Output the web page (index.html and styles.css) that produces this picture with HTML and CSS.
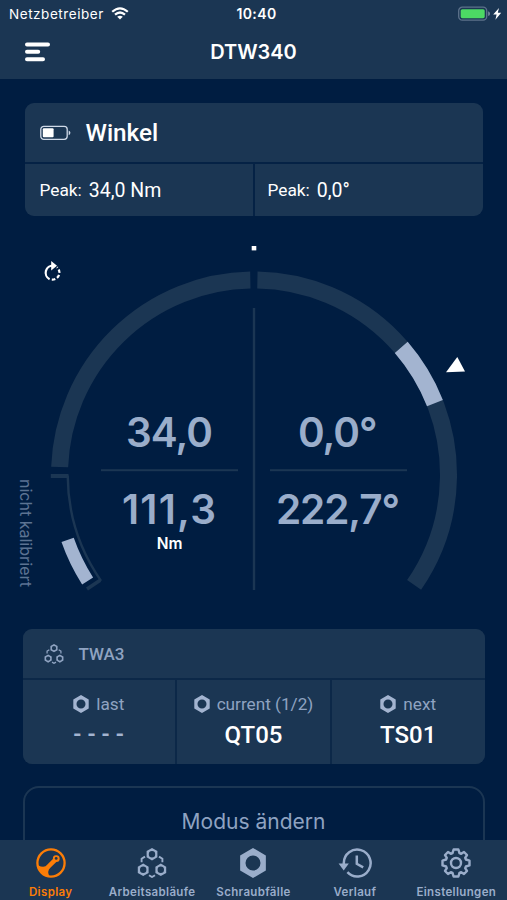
FILE: index.html
```html
<!DOCTYPE html>
<html lang="de">
<head>
  <meta charset="UTF-8" />
  <meta name="viewport" content="width=device-width, initial-scale=1" />
  <title>DTW340</title>
  <link rel="stylesheet" href="styles.css">
</head>
<body>
  <svg width="0" height="0" class="defs">
    <symbol id="nut" viewBox="0 0 24 28">
      <path fill-rule="evenodd" d="M12 0 24 7V21L12 28 0 21V7ZM12 7a7 7 0 1 0 0 14a7 7 0 1 0 0-14Z" fill="currentColor"/>
    </symbol>
    <symbol id="flow" viewBox="0 0 30 30">
      <g fill="currentColor" fill-rule="evenodd">
        <path d="M15 0 20.4 3.1V9.3L15 12.4 9.6 9.3V3.1ZM15 3a3.2 3.2 0 1 0 0 6.4a3.2 3.2 0 1 0 0-6.4Z"/>
        <path d="M6.2 15.6 11.6 18.7V24.9L6.2 28 0.8 24.9V18.7ZM6.2 18.6a3.2 3.2 0 1 0 0 6.4a3.2 3.2 0 1 0 0-6.4Z"/>
        <path d="M23.8 15.6 29.2 18.7V24.9L23.8 28 18.4 24.9V18.7ZM23.8 18.6a3.2 3.2 0 1 0 0 6.4a3.2 3.2 0 1 0 0-6.4Z"/>
      </g>
      <path d="M4.6 14.2V10.8L8 8.6M25.4 14.2V10.8L22 8.6M12 27.2 15 29 18 27.2" fill="none" stroke="currentColor" stroke-width="1.9"/>
    </symbol>
  </svg>

  <div class="app">
    <header class="header">
      <div class="status">
        <div class="carrier">
          <span>Netzbetreiber</span>
          <svg width="18" height="13" viewBox="0 0 18 13" fill="none" stroke="#fff" stroke-width="2.2">
            <path d="M1.2 4.8Q9-2.2 16.8 4.8M4 7.7Q9 3.3 14 7.7"/>
            <path d="M9 12.6 6.2 9.8Q9 7.6 11.8 9.8Z" fill="#fff" stroke="none"/>
          </svg>
        </div>
        <span class="clock">10:40</span>
        <svg class="charge" width="44" height="16" viewBox="0 0 44 16">
          <rect x="0.7" y="1.2" width="28" height="13" rx="3.6" fill="none" stroke="#5d728b" stroke-width="1.3"/>
          <rect x="2.7" y="3.2" width="24" height="9" rx="1.6" fill="#4cd964"/>
          <path d="M30.2 5.3Q32 6 32 7.7T30.2 10.1Z" fill="#7b8ca2"/>
          <path d="M41 2 35.2 8.6H38.6L37.4 13.8 43.2 6.8H39.8Z" fill="#fff"/>
        </svg>
      </div>
      <div class="titlebar">
        <svg class="menu" width="26" height="20" viewBox="0 0 26 20" stroke="#fff" stroke-width="4" stroke-linecap="round">
          <path d="M2 2.4H23M2 9.8H13.2M2 17.2H18"/>
        </svg>
        <h1>DTW340</h1>
      </div>
    </header>

    <main class="content">
      <section class="peak-card">
        <div class="peak-head">
          <svg width="31" height="16" viewBox="0 0 31 16">
            <rect x="0.8" y="1.3" width="26.4" height="13" rx="3" fill="none" stroke="#cfd9e8" stroke-width="1.3"/>
            <rect x="2.8" y="3.3" width="10.8" height="9" rx="1" fill="#fff"/>
            <path d="M28.7 5.4Q30.4 6 30.4 7.8T28.7 10.2Z" fill="#cfd9e8"/>
          </svg>
          <h2>Winkel</h2>
        </div>
        <div class="peak-cell"><span>Peak:</span><b>34,0 Nm</b></div>
        <div class="peak-cell"><span>Peak:</span><b>0,0°</b></div>
      </section>

      <!-- dial: every arc is a circle dashed in degrees -->
      <svg class="gauge" width="507" height="413" viewBox="0 216 507 413">
        <g fill="none" stroke="#1b3653" stroke-width="17">
          <circle cx="254" cy="474.5" r="194.5" pathLength="360" stroke-dasharray="86.7 360" transform="rotate(182.2 254 474.5)"/>
          <circle cx="254" cy="474.5" r="194.5" pathLength="360" stroke-dasharray="123.6 360" transform="rotate(-89 254 474.5)"/>
          <circle class="mark" cx="254" cy="474.5" r="194.5" pathLength="360" stroke-dasharray="19.3 360" transform="rotate(-40.8 254 474.5)"/>
          <circle class="mark" cx="254" cy="474.5" r="197.5" pathLength="360" stroke-dasharray="13.3 360" stroke-width="13" transform="rotate(147.4 254 474.5)"/>
          <circle cx="254" cy="474.5" r="186.3" pathLength="360" stroke-dasharray="34.5 360" stroke-width="2.4" transform="rotate(145.2 254 474.5)"/>
          <path d="M50.8 476H68.5" stroke-width="4"/>
          <path d="M100.2 580.2 87 589" stroke-width="3.5"/>
        </g>
        <g fill="#1b3653">
          <rect x="252.8" y="308" width="2.4" height="282"/>
          <rect x="101" y="469.2" width="137" height="2"/>
          <rect x="270" y="469.2" width="137" height="2"/>
        </g>
        <rect x="251.7" y="246" width="4.6" height="4.4" fill="#fff"/>
        <path d="M457.3 357 465 371.6 446 372.2Z" fill="#fff"/>
        <g fill="none" stroke="#fff" stroke-width="2.2">
          <path d="M53.4 265.6A7.2 7.2 0 0 0 49.6 279.2"/>
          <path d="M51.8 279.7A7.2 7.2 0 0 0 59.4 272.6A7.2 7.2 0 0 0 57 267.2" stroke-dasharray="3.6 2"/>
          <path d="M51.2 261 57 265.8 51.2 270.4Z" fill="#fff" stroke="none"/>
        </g>
        <g class="readout">
          <text x="126" y="446.5" textLength="87">34,0</text>
          <text x="122" y="524" textLength="94">111,3</text>
          <text x="298" y="446.5" textLength="79.5">0,0°</text>
          <text x="276" y="524" textLength="124">222,7°</text>
        </g>
        <text class="unit" x="169.5" y="549">Nm</text>
        <text class="uncal" transform="translate(20 479) rotate(90)">nicht kalibriert</text>
      </svg>

      <section class="flow-card">
        <div class="flow-head">
          <svg width="20" height="20"><use href="#flow"/></svg>
          <span>TWA3</span>
        </div>
        <div class="flow-cell">
          <p><svg width="16" height="18"><use href="#nut"/></svg>last</p>
          <strong class="empty">----</strong>
        </div>
        <div class="flow-cell">
          <p><svg width="16" height="18"><use href="#nut"/></svg>current (1/2)</p>
          <strong>QT05</strong>
        </div>
        <div class="flow-cell">
          <p><svg width="16" height="18"><use href="#nut"/></svg>next</p>
          <strong>TS01</strong>
        </div>
      </section>

      <button class="mode">Modus ändern</button>
    </main>

    <nav class="tabs">
      <a class="tab active">
        <svg width="30" height="30" viewBox="0 0 30 30">
          <circle cx="15" cy="15" r="13.6" fill="none" stroke="currentColor" stroke-width="2.3"/>
          <path d="M2 17.2Q8.5 20.6 11.4 16.4L16.9 11A3.4 3.4 0 1 1 20.3 14L14.4 19.8Q10.6 23 13.6 28.8Q4 27.5 2 17.2Z" fill="currentColor"/>
          <circle cx="20.2" cy="10.4" r="1.4" fill="#1b3653"/>
        </svg>
        <span>Display</span>
      </a>
      <a class="tab">
        <svg width="30" height="30"><use href="#flow"/></svg>
        <span>Arbeitsabläufe</span>
      </a>
      <a class="tab">
        <svg width="30" height="30"><use href="#nut"/></svg>
        <span>Schraubfälle</span>
      </a>
      <a class="tab">
        <svg width="34" height="30" viewBox="0 0 34 30" fill="none" stroke="currentColor" stroke-width="2.5">
          <path d="M5.8 17V15A13.4 13.4 0 1 1 9.4 24.2"/>
          <path d="M0.6 15.5H10.8L5.7 22.5Z" fill="currentColor" stroke="none"/>
          <path d="M18.8 7.5V15.8L25.2 19.3"/>
        </svg>
        <span>Verlauf</span>
      </a>
      <a class="tab">
        <svg width="30" height="30" viewBox="0 0 30 30" fill="none" stroke="currentColor" stroke-width="2.4" stroke-linejoin="round">
          <circle cx="15" cy="15" r="5"/>
          <path d="M12.6 1.5H17.4L18.5 5.1 20.2 5.8 23 4 26 7 24.2 9.8 24.9 11.5 28.5 12.6V17.4L24.9 18.5 24.2 20.2 26 23 23 26 20.2 24.2 18.5 24.9 17.4 28.5H12.6L11.5 24.9 9.8 24.2 7 26 4 23 5.8 20.2 5.1 18.5 1.5 17.4V12.6L5.1 11.5 5.8 9.8 4 7 7 4 9.8 5.8 11.5 5.1Z"/>
        </svg>
        <span>Einstellungen</span>
      </a>
    </nav>
  </div>
</body>
</html>
```
FILE: styles.css
```css
* {
  box-sizing: border-box;
}
body {
  margin: 0;
  background: #001d41;
  color: #fff;
  font-family: Roboto, "Liberation Sans", sans-serif;
}
h1, h2, p {
  margin: 0;
}
svg {
  display: block;
  flex: none;
}
.defs {
  display: none;
}
.app {
  width: 507px;
  height: 900px;
  display: flex;
  flex-direction: column;
  overflow: hidden;
}

/* header */
.header {
  height: 79px;
  background: #1b3653;
  font-family: Inter, sans-serif;
}
.status {
  height: 27px;
  padding: 0 5px 0 9px;
  display: grid;
  grid-template-columns: 1fr auto 1fr;
  align-items: center;
  font-size: 13.5px;
}
.carrier {
  display: flex;
  align-items: center;
  gap: 7px;
  letter-spacing: 0.55px;
}
.clock {
  font-weight: 600;
  font-size: 14px;
  letter-spacing: 0.4px;
  padding-left: 2px;
}
.charge {
  justify-self: end;
}
.titlebar {
  height: 50px;
  padding: 0 25px;
  display: grid;
  grid-template-columns: 1fr auto 1fr;
  align-items: center;
}
.titlebar h1 {
  font-size: 20px;
  font-weight: 600;
}

.content {
  flex: 1;
  min-height: 0;
  overflow: hidden;
  display: flex;
  flex-direction: column;
  align-items: center;
}

/* peak values */
.peak-card {
  width: 458px;
  height: 113px;
  margin-top: 24px;
  flex: none;
  display: grid;
  grid-template-columns: 1fr 1fr;
  grid-template-rows: 59px 52px;
  gap: 2px;
  border-radius: 9px;
  overflow: hidden;
  background: #052245;
}
.peak-head {
  grid-column: 1 / -1;
  background: #1b3653;
  padding-left: 15px;
  display: flex;
  align-items: center;
  gap: 15px;
}
.peak-head h2 {
  font-size: 24.3px;
  font-weight: 500;
}
.peak-cell {
  background: #1b3653;
  padding-left: 15px;
  display: flex;
  align-items: center;
  gap: 7px;
  font-size: 17.3px;
}
.peak-cell:last-child {
  padding-left: 13px;
}
.peak-cell b {
  font-size: 19.5px;
  font-weight: 400;
}

/* gauge */
.gauge {
  font-family: Inter, sans-serif;
}
.mark {
  stroke: #a3b4d0;
}
.readout {
  fill: #9aadca;
  font-size: 40.5px;
  font-weight: 600;
}
.unit {
  fill: #fff;
  font-size: 15.5px;
  font-weight: 600;
  text-anchor: middle;
}
.uncal {
  fill: #5c7392;
  font-size: 16px;
}

/* workflow */
.flow-card {
  width: 462px;
  height: 135px;
  flex: none;
  display: grid;
  grid-template-columns: repeat(3, 1fr);
  grid-template-rows: 49px 84px;
  gap: 2px;
  border-radius: 9px;
  overflow: hidden;
  background: #0c2848;
  color: #8fa3c1;
}
.flow-head {
  grid-column: 1 / -1;
  background: #1b3653;
  padding-left: 21px;
  display: flex;
  align-items: center;
  gap: 15px;
  font-size: 17px;
  font-weight: 500;
}
.flow-cell {
  background: #1b3653;
  padding-top: 13px;
  text-align: center;
}
.flow-cell p {
  display: flex;
  justify-content: center;
  align-items: center;
  gap: 7px;
  font-size: 17.2px;
  line-height: 22px;
}
.flow-cell svg {
  color: #a3b4d0;
}
.flow-cell strong {
  display: block;
  margin-top: 6px;
  font-size: 24px;
  line-height: 28px;
  font-weight: 500;
  color: #fff;
}
.flow-cell .empty {
  color: #a3b4d0;
  font-size: 22px;
  font-weight: 700;
  letter-spacing: 5.5px;
  padding-left: 5px;
}
.mode {
  width: 462px;
  height: 70px;
  margin-top: 22px;
  flex: none;
  background: none;
  border: 2px solid #1b3653;
  border-radius: 16px;
  color: #8fa3c1;
  font-family: Inter, sans-serif;
  font-size: 21px;
}

/* tab bar */
.tabs {
  height: 60px;
  flex: none;
  background: #1b3653;
  display: grid;
  grid-template-columns: repeat(5, 1fr);
  font-family: Inter, sans-serif;
}
.tab {
  display: flex;
  flex-direction: column;
  align-items: center;
  padding-top: 8px;
  gap: 7px;
  color: #9aadca;
}
.tab span {
  font-size: 11.5px;
  line-height: 14px;
  font-weight: 600;
  letter-spacing: 0.35px;
}
.tab.active {
  color: #fb7d07;
}
```
